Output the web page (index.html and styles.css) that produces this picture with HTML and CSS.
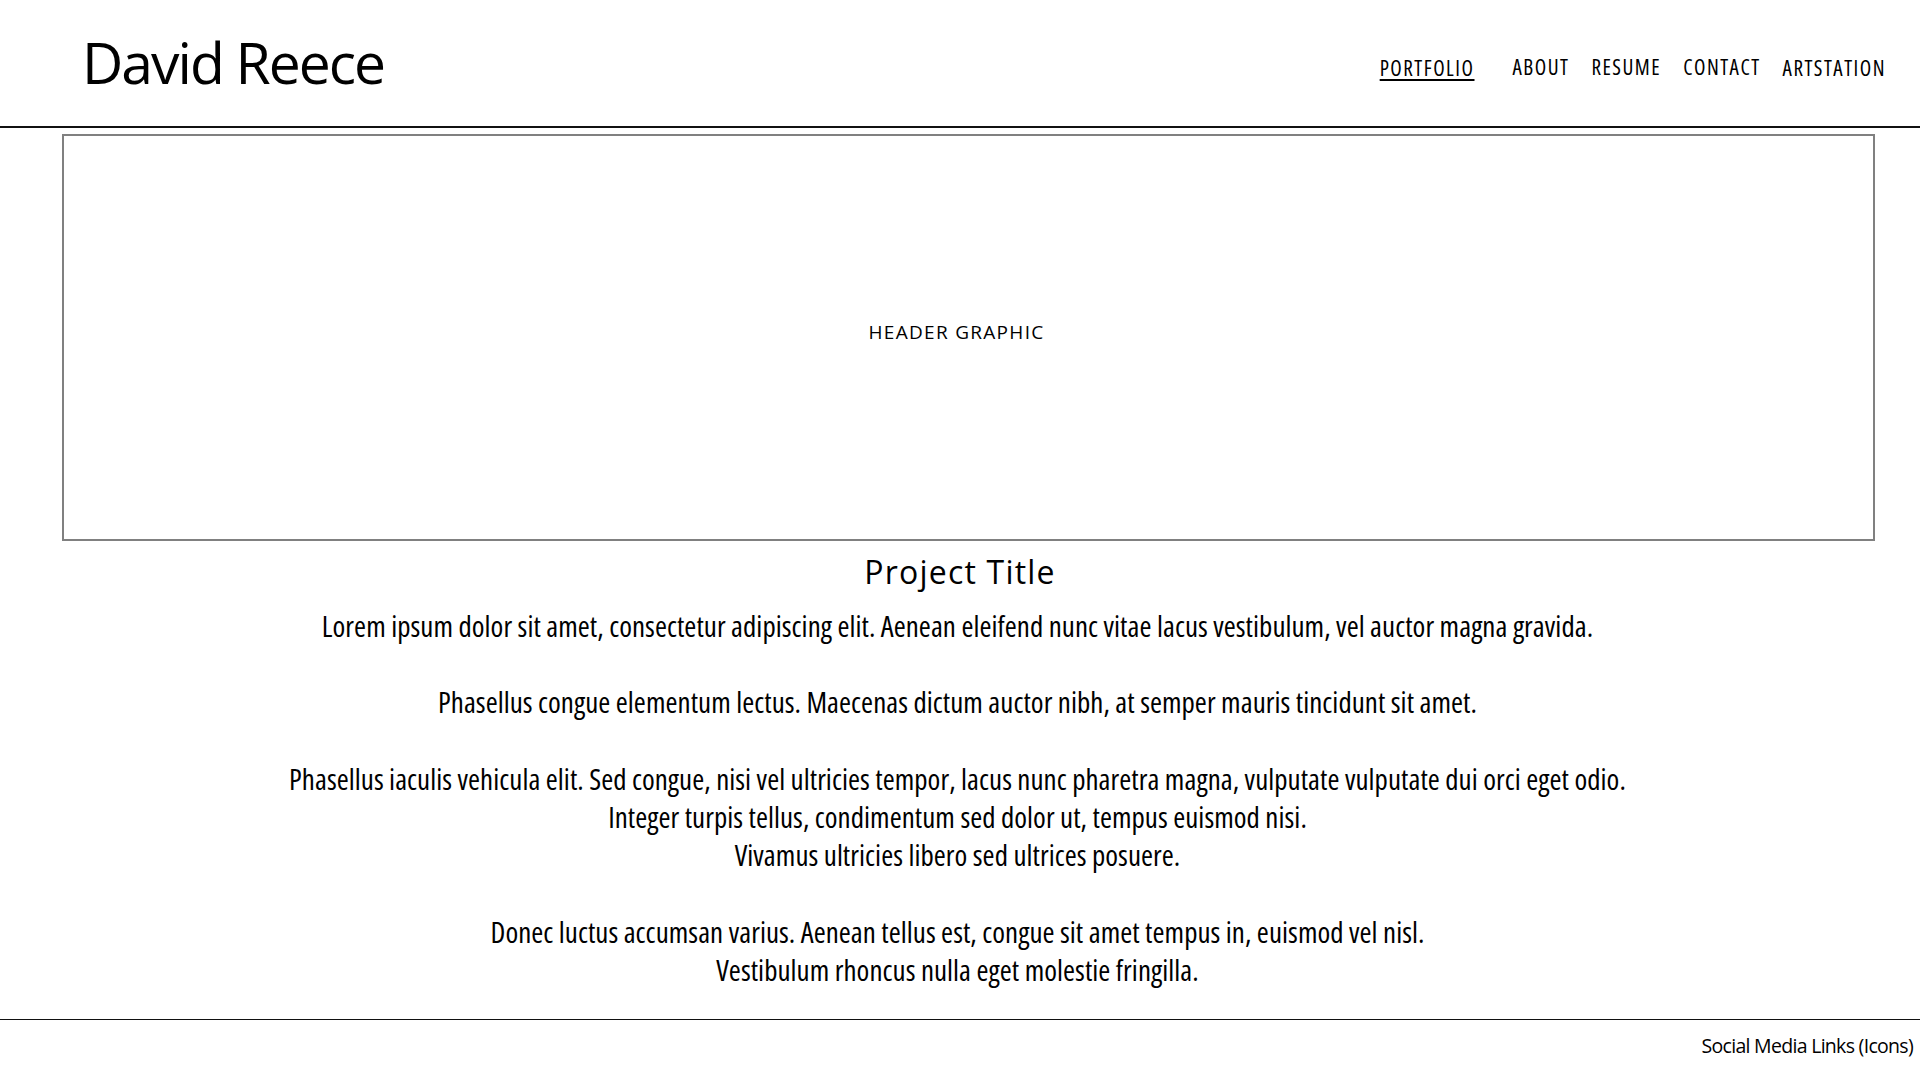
FILE: index.html
```html
<!DOCTYPE html>
<html lang="en">
<head>
<meta charset="utf-8">
<title>David Reece - Portfolio</title>
<link rel="stylesheet" href="styles.css">
</head>
<body>
<header class="site-header">
  <h1 class="site-name">David Reece</h1>
  <nav class="main-nav">
    <a class="nav-link nav-current" href="#">PORTFOLIO</a>
    <a class="nav-link nav-mid" href="#">ABOUT</a>
    <a class="nav-link nav-mid" href="#">RESUME</a>
    <a class="nav-link nav-mid" href="#">CONTACT</a>
    <a class="nav-link" href="#">ARTSTATION</a>
  </nav>
</header>
<main class="content">
  <div class="hero">
    <span class="hero-label">HEADER GRAPHIC</span>
  </div>
  <section class="project">
    <h2 class="project-title">Project Title</h2>
    <p class="project-text">Lorem ipsum dolor sit amet, consectetur adipiscing elit. Aenean eleifend nunc vitae lacus vestibulum, vel auctor magna gravida.</p>
    <p class="project-text">Phasellus congue elementum lectus. Maecenas dictum auctor nibh, at semper mauris tincidunt sit amet.</p>
    <p class="project-text">Phasellus iaculis vehicula elit. Sed congue, nisi vel ultricies tempor, lacus nunc pharetra magna, vulputate vulputate dui orci eget odio.<br>Integer turpis tellus, condimentum sed dolor ut, tempus euismod nisi.<br>Vivamus ultricies libero sed ultrices posuere.</p>
    <p class="project-text">Donec luctus accumsan varius. Aenean tellus est, congue sit amet tempus in, euismod vel nisl.<br>Vestibulum rhoncus nulla eget molestie fringilla.</p>
  </section>
</main>
<footer class="site-footer">
  <span class="social-links">Social Media Links (Icons)</span>
</footer>
</body>
</html>
```
FILE: styles.css
```css
* { box-sizing: border-box; }

html, body {
  margin: 0;
  padding: 0;
  background: #ffffff;
  color: #000000;
}

body {
  font-family: "Open Sans", "Liberation Sans", sans-serif;
  min-height: 100vh;
  display: flex;
  flex-direction: column;
}

/* Header */
.site-header {
  height: 128px;
  border-bottom: 2px solid #111;
  display: flex;
  justify-content: space-between;
  align-items: flex-start;
  padding: 0 34px 0 82px;
}

.site-name {
  margin: 28px 0 0 0;
  font-size: 57px;
  line-height: 68px;
  font-weight: 400;
  letter-spacing: -2px;
}

.main-nav {
  display: flex;
  align-items: flex-start;
  gap: 22px;
  margin-top: 54px;
}

.nav-link {
  font-size: 21px;
  line-height: 28px;
  font-stretch: 75%;
  letter-spacing: 1.5px;
  color: #000;
  text-decoration: none;
}

.nav-mid {
  margin-top: -1.5px;
}

.nav-current {
  text-decoration: underline;
  text-decoration-thickness: 2px;
  text-underline-offset: 3px;
  margin-right: 16px;
}

/* Main */
.content {
  flex: 1;
  display: flex;
  flex-direction: column;
}

.hero {
  margin: 6px 45px 0 62px;
  height: 407px;
  border: 2px solid #808080;
  display: flex;
  align-items: center;
  justify-content: center;
  padding: 0 24px 12px 0;
}

.hero-label {
  font-size: 19px;
  line-height: 24px;
  letter-spacing: 1.3px;
}

.project {
  text-align: center;
}

.project-title {
  margin: 13px 0 0 0;
  font-size: 32px;
  line-height: 36px;
  font-weight: 400;
  letter-spacing: 1.2px;
}

.project-text {
  margin: 17px 0 0 0;
  padding-right: 5px;
  font-size: 29px;
  line-height: 38.2px;
  font-stretch: 75%;
  letter-spacing: 0.05px;
}

.project-text + .project-text {
  margin-top: 38.2px;
}

/* Footer */
.site-footer {
  border-top: 1.5px solid #111;
  height: 61px;
  padding: 14px 7px 0 0;
  text-align: right;
}

.social-links {
  font-size: 19.5px;
  line-height: 24px;
  letter-spacing: -0.7px;
}
```
